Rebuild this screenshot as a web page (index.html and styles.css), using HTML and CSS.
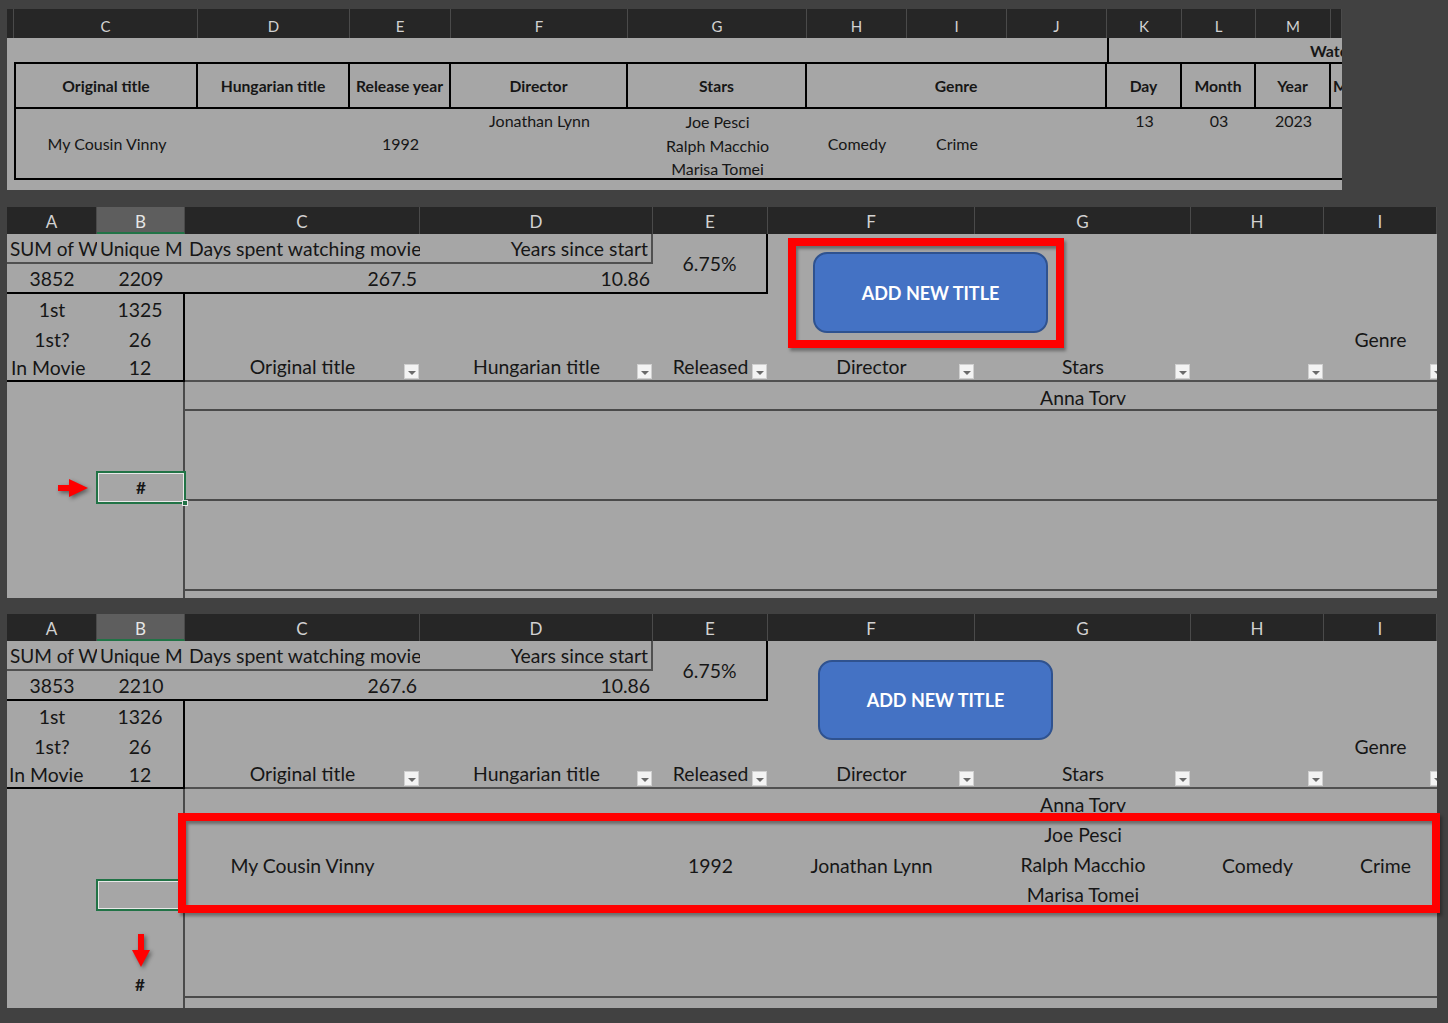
FILE: index.html
```html
<!DOCTYPE html>
<html lang="en">
<head>
<meta charset="utf-8">
<title>Movies sheet</title>
<link rel="stylesheet" href="styles.css">
</head>
<body>
<div class="page">

  <section class="sheet sheet-top">
    <div class="grid grid-top">
      <div class="colhead"></div><div class="colhead">C</div><div class="colhead">D</div><div class="colhead">E</div><div class="colhead">F</div><div class="colhead">G</div><div class="colhead">H</div><div class="colhead">I</div><div class="colhead">J</div><div class="colhead">K</div><div class="colhead">L</div><div class="colhead">M</div><div class="colhead"></div>

      <div class="cell span-9"></div>
      <div class="cell span-4 watched">Watched</div>

      <div class="cell"></div>
      <div class="cell th th-first">Original title</div>
      <div class="cell th">Hungarian title</div>
      <div class="cell th">Release year</div>
      <div class="cell th">Director</div>
      <div class="cell th">Stars</div>
      <div class="cell th span-3">Genre</div>
      <div class="cell th">Day</div>
      <div class="cell th">Month</div>
      <div class="cell th">Year</div>
      <div class="cell th th-cut">Movie</div>

      <div class="cell"></div>
      <div class="cell td td-first">My Cousin Vinny</div>
      <div class="cell td"></div>
      <div class="cell td">1992</div>
      <div class="cell td top">Jonathan Lynn</div>
      <div class="cell td stack"><span>Joe Pesci</span><span>Ralph Macchio</span><span>Marisa Tomei</span></div>
      <div class="cell td">Comedy</div>
      <div class="cell td">Crime</div>
      <div class="cell td"></div>
      <div class="cell td top">13</div>
      <div class="cell td top">03</div>
      <div class="cell td top">2023</div>
      <div class="cell td"></div>

      <div class="cell span-13"></div>
    </div>
  </section>

  <section class="sheet sheet-main">
    <div class="grid grid-main">
      <div class="colhead">A</div><div class="colhead sel">B</div><div class="colhead">C</div><div class="colhead">D</div><div class="colhead">E</div><div class="colhead">F</div><div class="colhead">G</div><div class="colhead">H</div><div class="colhead">I</div>

      <div class="cell label bb-g">SUM of W</div>
      <div class="cell label bb-g">Unique M</div>
      <div class="cell left bb-g">Days spent watching movie</div>
      <div class="cell right bb-g br-g">Years since start</div>
      <div class="cell rows-2 br-k bb-k">6.75%</div>
      <div class="cell span-4"></div>

      <div class="cell bb-k">3852</div>
      <div class="cell bb-k">2209</div>
      <div class="cell right bb-k">267.5</div>
      <div class="cell right bb-k">10.86</div>
      <div class="cell span-4"></div>

      <div class="cell">1st</div>
      <div class="cell br-k">1325</div>
      <div class="cell span-7"></div>

      <div class="cell">1st?</div>
      <div class="cell br-k">26</div>
      <div class="cell span-6"></div>
      <div class="cell">Genre</div>

      <div class="cell left bb-k">In Movie</div>
      <div class="cell br-k bb-k">12</div>
      <div class="cell hdr bb-g">Original title<span class="filter"></span></div>
      <div class="cell hdr bb-g">Hungarian title<span class="filter"></span></div>
      <div class="cell hdr bb-g">Released<span class="filter"></span></div>
      <div class="cell hdr bb-g">Director<span class="filter"></span></div>
      <div class="cell hdr bb-g">Stars<span class="filter"></span></div>
      <div class="cell hdr bb-g"><span class="filter"></span></div>
      <div class="cell hdr bb-g"><span class="filter filter-cut"></span></div>

      <div class="cell"></div>
      <div class="cell br-d"></div>
      <div class="cell span-4 bb-d"></div>
      <div class="cell bb-d low">Anna Torv</div>
      <div class="cell span-2 bb-d"></div>

      <div class="cell"></div>
      <div class="cell br-d"></div>
      <div class="cell span-7 bb-d"></div>

      <div class="cell"></div>
      <div class="cell br-d"></div>
      <div class="cell span-7 bb-d"></div>

      <div class="cell"></div>
      <div class="cell br-d"></div>
      <div class="cell span-7"></div>
    </div>

    <div class="redbox redbox-btn"></div>
    <div class="add-btn add-btn-1">ADD NEW TITLE</div>
    <div class="selection selection-1"><span>#</span><i class="handle"></i></div>
    <svg class="arrow arrow-right" width="30" height="18" viewBox="0 0 30 18"><rect x="0" y="6" width="12" height="6" fill="#ff0000"/><polygon points="11,0 30,9 11,18" fill="#ff0000"/></svg>
  </section>

  <section class="sheet sheet-main sheet-last">
    <div class="grid grid-main grid-last">
      <div class="colhead">A</div><div class="colhead sel">B</div><div class="colhead">C</div><div class="colhead">D</div><div class="colhead">E</div><div class="colhead">F</div><div class="colhead">G</div><div class="colhead">H</div><div class="colhead">I</div>

      <div class="cell label bb-g">SUM of W</div>
      <div class="cell label bb-g">Unique M</div>
      <div class="cell left bb-g">Days spent watching movie</div>
      <div class="cell right bb-g br-g">Years since start</div>
      <div class="cell rows-2 br-k bb-k">6.75%</div>
      <div class="cell span-4"></div>

      <div class="cell bb-k">3853</div>
      <div class="cell bb-k">2210</div>
      <div class="cell right bb-k">267.6</div>
      <div class="cell right bb-k">10.86</div>
      <div class="cell span-4"></div>

      <div class="cell">1st</div>
      <div class="cell br-k">1326</div>
      <div class="cell span-7"></div>

      <div class="cell">1st?</div>
      <div class="cell br-k">26</div>
      <div class="cell span-6"></div>
      <div class="cell">Genre</div>

      <div class="cell left tight bb-k">In Movie</div>
      <div class="cell br-k bb-k">12</div>
      <div class="cell hdr bb-g">Original title<span class="filter"></span></div>
      <div class="cell hdr bb-g">Hungarian title<span class="filter"></span></div>
      <div class="cell hdr bb-g">Released<span class="filter"></span></div>
      <div class="cell hdr bb-g">Director<span class="filter"></span></div>
      <div class="cell hdr bb-g">Stars<span class="filter"></span></div>
      <div class="cell hdr bb-g"><span class="filter"></span></div>
      <div class="cell hdr bb-g"><span class="filter filter-cut"></span></div>

      <div class="cell"></div>
      <div class="cell br-d"></div>
      <div class="cell span-4 bb-d"></div>
      <div class="cell bb-d low">Anna Torv</div>
      <div class="cell span-2 bb-d"></div>

      <div class="cell"></div>
      <div class="cell br-d"></div>
      <div class="cell bb-d new-row">My Cousin Vinny</div>
      <div class="cell bb-d new-row"></div>
      <div class="cell bb-d new-row">1992</div>
      <div class="cell bb-d new-row">Jonathan Lynn</div>
      <div class="cell bb-d new-row stack-lg"><span>Joe Pesci</span><span>Ralph Macchio</span><span>Marisa Tomei</span></div>
      <div class="cell bb-d new-row">Comedy</div>
      <div class="cell bb-d new-row shift-right">Crime</div>

      <div class="cell"></div>
      <div class="cell br-d bottom hash">#</div>
      <div class="cell span-7 bb-d"></div>

      <div class="cell"></div>
      <div class="cell br-d"></div>
      <div class="cell span-7"></div>
    </div>

    <div class="add-btn add-btn-2">ADD NEW TITLE</div>
    <div class="selection selection-2"></div>
    <div class="redbox redbox-row"></div>
    <svg class="arrow arrow-down" width="18" height="33" viewBox="0 0 18 33"><rect x="6" y="0" width="6" height="17" fill="#ff0000"/><polygon points="0,16 18,16 9,33" fill="#ff0000"/></svg>
  </section>

</div>
</body>
</html>
```

FILE: styles.css
```css
* {
  box-sizing: border-box;
  margin: 0;
  padding: 0;
}

html, body {
  background: #414141;
}

body {
  font-family: Lato, "Open Sans", "Liberation Sans", sans-serif;
  color: #161616;
  width: 1448px;
  height: 1023px;
  overflow: hidden;
}

.page {
  padding: 9px 0 0 7px;
  display: flex;
  flex-direction: column;
  align-items: flex-start;
}

.sheet {
  position: relative;
  background: #a6a6a6;
}

.sheet-top {
  width: 1335px;
}

.sheet-main {
  width: 1430px;
  margin-top: 17px;
}

.sheet-last {
  margin-top: 16px;
}

.grid {
  display: grid;
}

.grid-top {
  grid-template-columns: 7px 184px 152px 101px 177px 179px 100px 100px 100px 75px 74px 75px 11px;
  grid-template-rows: 29px 24px 47px 71px 10px;
}

.grid-main {
  grid-template-columns: 90px 88px 235px 233px 115px 207px 216px 133px 113px;
  grid-template-rows: 27px 30px 30px 30px 30px 28px 29px 90px 90px 7px;
}

.grid-last {
  grid-template-rows: 27px 30px 30px 30px 30px 28px 29px 90px 90px 10px;
}

/* column letter bar */
.colhead {
  background: #262626;
  color: #d2d2d2;
  display: flex;
  align-items: center;
  justify-content: center;
  border-right: 1px solid #4a4a4a;
  font-size: 15px;
  padding-top: 4px;
}

.sheet-main .colhead {
  font-size: 17px;
  padding-top: 2px;
}

.colhead.sel {
  background: #5e5e5e;
  border-bottom: 2px solid #217346;
  color: #e6e6e6;
  padding-top: 4px;
}

/* cells */
.cell {
  display: flex;
  align-items: center;
  justify-content: center;
  white-space: nowrap;
  overflow: hidden;
  min-width: 0;
  position: relative;
}

.sheet-top .cell {
  font-size: 16px;
}

.sheet-top .th {
  font-size: 15.7px;
}

.sheet-main .cell {
  font-size: 19.4px;
}

.sheet-main .label {
  font-size: 19px;
  justify-content: flex-start;
  padding-left: 3px;
}

.span-2 { grid-column: span 2; }
.span-3 { grid-column: span 3; }
.span-4 { grid-column: span 4; }
.span-6 { grid-column: span 6; }
.span-7 { grid-column: span 7; }
.span-9 { grid-column: span 9; }
.span-13 { grid-column: span 13; }
.rows-2 { grid-row: span 2; }

.left {
  justify-content: flex-start;
  padding-left: 4px;
}

.left.tight {
  padding-left: 2px;
}

.right {
  justify-content: flex-end;
  padding-right: 3px;
}

.top {
  align-items: flex-start;
  line-height: 24px;
}

.bottom {
  align-items: flex-end;
}

.low {
  padding-top: 4px;
}

.new-row {
  padding-top: 6px;
}

.shift-right {
  padding-left: 10px;
}

.bb-g { border-bottom: 2px solid #505050; }
.br-g { border-right: 2px solid #505050; }
.bb-k { border-bottom: 2px solid #000; }
.br-k { border-right: 2px solid #000; }
.bb-d { border-bottom: 2px solid #4a4a4a; }
.br-d { border-right: 2px solid #4a4a4a; }

/* top sheet table */
.watched {
  border-left: 2px solid #000;
  justify-content: flex-start;
  padding-left: 201px;
  font-weight: 700;
}

.th {
  font-weight: 700;
  border-top: 2px solid #000;
  border-right: 2px solid #000;
  border-bottom: 2px solid #000;
}

.th-first {
  border-left: 2px solid #000;
}

.th-cut {
  border-right: 0;
  justify-content: flex-start;
  padding-left: 2px;
}

.td {
  border-bottom: 2px solid #000;
}

.td-first {
  border-left: 2px solid #000;
}

.stack {
  flex-direction: column;
  line-height: 23.5px;
  padding-top: 4px;
}

.stack-lg {
  flex-direction: column;
  line-height: 30px;
}

/* table header row with filter buttons */
.hdr {
  align-items: flex-end;
  padding-bottom: 2px;
}

.filter {
  position: absolute;
  right: 1px;
  bottom: 1px;
  width: 15px;
  height: 15px;
  background: #f3f3f3;
  border: 1px solid #d0d0d0;
  display: flex;
  align-items: center;
  justify-content: center;
}

.filter::after {
  content: "";
  width: 0;
  height: 0;
  border-left: 4px solid transparent;
  border-right: 4px solid transparent;
  border-top: 4px solid #6a6a6a;
  margin-top: 2px;
}

.filter-cut {
  right: -8px;
}

.sheet-main .hash {
  font-weight: 700;
  font-size: 17px;
  padding-bottom: 3px;
}

/* overlays */
.redbox {
  position: absolute;
  border: 8px solid #ff0000;
  box-shadow: 2px 3px 3px rgba(0, 0, 0, 0.35), inset 2px 3px 3px rgba(0, 0, 0, 0.35);
}

.redbox-btn {
  left: 781px;
  top: 31px;
  width: 276px;
  height: 110px;
}

.redbox-row {
  left: 171px;
  top: 199px;
  width: 1262px;
  height: 100px;
}

.add-btn {
  position: absolute;
  width: 235px;
  height: 81px;
  background: #4472c4;
  border: 2px solid #2f528f;
  border-radius: 14px;
  color: #fff;
  font-weight: 700;
  font-size: 18px;
  display: flex;
  align-items: center;
  justify-content: center;
}

.add-btn-1 {
  left: 806px;
  top: 45px;
}

.add-btn-2 {
  left: 811px;
  top: 46px;
  height: 80px;
}

.selection {
  position: absolute;
  width: 90px;
  height: 33px;
  border: 2px solid #217346;
  box-shadow: inset 0 0 0 1px #e8e8e8;
  display: flex;
  align-items: center;
  justify-content: center;
  font-weight: 700;
  font-size: 17px;
}

.selection-1 {
  left: 89px;
  top: 264px;
}

.selection-2 {
  left: 89px;
  top: 265px;
  height: 32px;
}

.handle {
  position: absolute;
  right: -4px;
  bottom: -4px;
  width: 6px;
  height: 6px;
  background: #217346;
  border: 1px solid #e8e8e8;
}

.arrow {
  position: absolute;
  filter: drop-shadow(2px 2px 2px rgba(0, 0, 0, 0.45));
}

.arrow-right {
  left: 51px;
  top: 272px;
}

.arrow-down {
  left: 125px;
  top: 320px;
}
```
